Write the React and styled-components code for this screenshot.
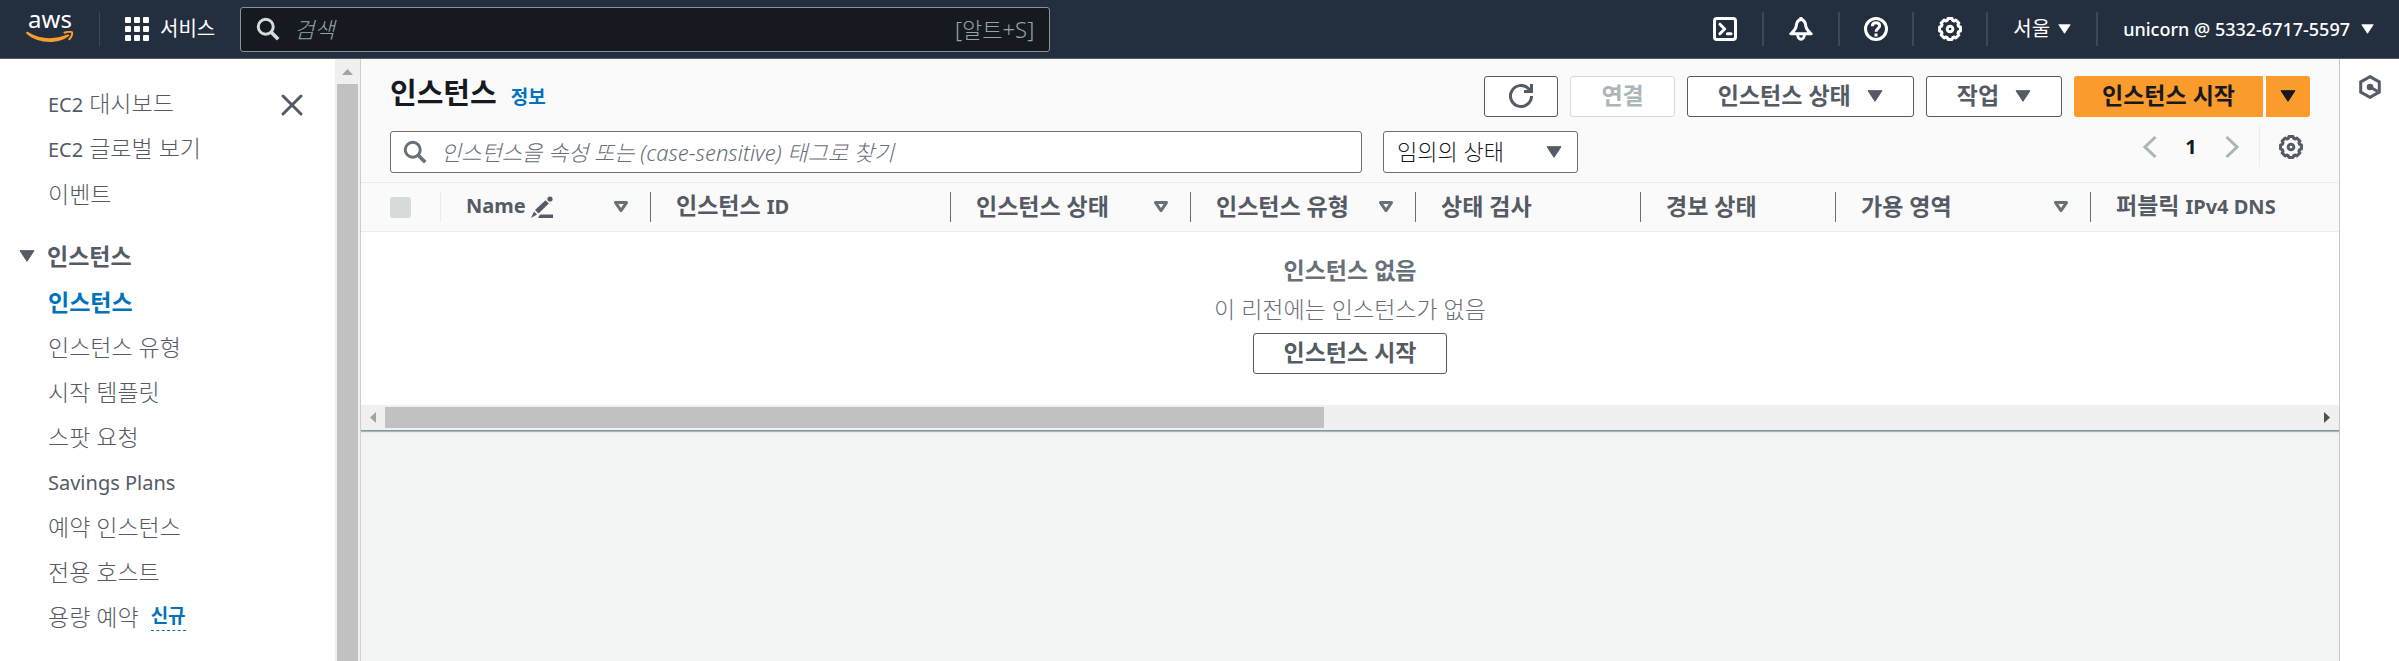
import React from "react";
import styled, { createGlobalStyle, css } from "styled-components";

const Global = createGlobalStyle`
  *, *::before, *::after { box-sizing: border-box; }
  html, body, #root { height: 100%; }
  body {
    margin: 0;
    color: #545b64;
    background: #f2f4f4;
    font-family: "Noto Sans", "Noto Sans CJK KR", sans-serif;
    font-size: 23px;
    font-weight: 300;
    line-height: 30px;
  }
  button, input, select { font: inherit; color: inherit; margin: 0; }
  a { color: inherit; text-decoration: none; }
  svg { display: block; flex: none; }
`;

const Shell = styled.div`
  min-height: 100%;
  display: flex;
  flex-direction: column;
`;

/* ---------- icons ---------- */

const Stroke = ({ size = 24, w = 2, children }) => (
  <svg width={size} height={size} viewBox="0 0 16 16" fill="none" stroke="currentColor" strokeWidth={w} aria-hidden="true">
    {children}
  </svg>
);

const SearchIcon = () => (
  <Stroke>
    <circle cx="6.5" cy="6.5" r="5" />
    <path d="M10 10 14.800 14.800" strokeWidth="2.400" />
  </Stroke>
);

const CloseIcon = () => (
  <Stroke>
    <path d="M2 2l12 12M14 2L2 14" strokeLinecap="round" />
  </Stroke>
);

const gearPath = (() => {
  const teeth = 8;
  const pts = [];
  for (let i = 0; i < teeth; i++) {
    const a = (i / teeth) * Math.PI * 2;
    [[-0.2, 7.1], [0.2, 7.1], [0.3, 6], [0.485, 6]].forEach(([d, r]) => {
      pts.push(`${(8 + r * Math.sin(a + d)).toFixed(2)} ${(8 - r * Math.cos(a + d)).toFixed(2)}`);
    });
  }
  return `M${pts.join("L")}Z`;
})();

const GearIcon = () => (
  <Stroke>
    <path d={gearPath} strokeLinejoin="round" />
    <circle cx="8" cy="8" r="1.9" />
  </Stroke>
);

const TerminalIcon = () => (
  <Stroke>
    <rect x="1" y="1" width="14" height="14" rx="1.6" />
    <path d="M4.6 4.800 7.800 8l-3.200 3.200" strokeLinejoin="round" strokeLinecap="round" />
    <path d="M9.600 11.100h2.400" strokeLinecap="round" />
  </Stroke>
);

const BellIcon = () => (
  <Stroke>
    <path d="M8 1.500C5.700 2.200 5 4 4.800 6 4.500 8.400 3.200 9.400 1.200 11.200h13.600C12.800 9.400 11.500 8.400 11.200 6 11 4 10.300 2.200 8 1.500Z" strokeLinejoin="round" />
    <path d="M5.800 11.800a2.200 3 0 0 0 4.400 0" />
    <path d="M8 0v2" />
  </Stroke>
);

const HelpIcon = () => (
  <Stroke>
    <circle cx="8" cy="8" r="7" />
    <path d="M5.600 6.200C5.600 4.700 6.600 3.900 8 3.900s2.400.800 2.400 2.100C10.400 7.700 8 7.600 8 9.800" />
    <path d="M8 11v2" />
  </Stroke>
);

const RefreshIcon = () => (
  <Stroke>
    <path d="M15 8a7 7 0 1 1-2.200-5.100L14.300 4.500" />
    <path d="M15 0v5h-5" />
  </Stroke>
);

const HexIcon = () => (
  <Stroke>
    <path d="M8 1.100 14.200 4.600v6.800L8 14.900 1.800 11.400V4.600Z" />
    <circle cx="8" cy="8" r="2.200" fill="currentColor" stroke="none" />
    <path d="M8 8l5 2.800" />
  </Stroke>
);

const EditIcon = () => (
  <svg width="22" height="22" viewBox="0 0 22 22" fill="currentColor" aria-hidden="true">
    <circle cx="19" cy="3" r="2.600" />
    <path d="M14.500 4.200 17.800 7.500 7.500 17.500 4 14Z" />
    <path d="M3 15.500 6 18.500 0 22Z" />
    <path d="M9 18.500h13V22H7Z" />
  </svg>
);

const GridIcon = () => (
  <svg width="24" height="24" viewBox="0 0 24 24" fill="currentColor" aria-hidden="true">
    {[0, 9, 18].map((y) => [0, 9, 18].map((x) => <rect key={`${x}-${y}`} x={x} y={y} width="6" height="6" rx="1" />))}
  </svg>
);

const Caret = ({ width = 16, height = 12 }) => (
  <svg width={width} height={height} viewBox="0 0 16 12" fill="currentColor" stroke="currentColor" strokeLinejoin="round" aria-hidden="true">
    <path d="M1 .700h14L8 11.300Z" />
  </svg>
);

const SortCaret = () => (
  <svg width="16" height="12" viewBox="0 0 16 12" fill="none" stroke="#687078" strokeWidth="3" strokeLinejoin="round" aria-hidden="true">
    <path d="M2.500 1.600h11L8 9.600Z" />
  </svg>
);

const Chevron = ({ flip }) => (
  <svg width="14" height="22" viewBox="0 0 14 22" fill="none" stroke="currentColor" strokeWidth="3" aria-hidden="true">
    <path d={flip ? "M1.500 1 12 11 1.500 21" : "M12.500 1 2 11 12.500 21"} />
  </svg>
);

/* ---------- top navigation ---------- */

const TopNav = styled.header`
  display: flex;
  align-items: center;
  height: 59px;
  padding: 0 0 0 26px;
  color: #fff;
  background: #232f3e;
  border-bottom: 1px solid #545b64;
  font-size: 20px;
`;

const Logo = styled.a`
  display: flex;
  flex-direction: column;
  align-items: center;
  width: 48px;
  margin-right: 25px;
  padding-bottom: 9px;
  font-size: 24px;
  font-weight: 400;
  line-height: 24px;
`;

const NavDivider = styled.span`
  flex: none;
  width: ${(p) => p.$width || 2}px;
  height: 34px;
  background: #414750;
`;

const NavButton = styled.button`
  display: flex;
  align-items: center;
  gap: ${(p) => p.$gap || 8}px;
  padding: 0 ${(p) => p.$pad || 25}px;
  border: 0;
  background: none;
  font-weight: 400;
  white-space: nowrap;
`;

const NavSearch = styled.label`
  display: flex;
  align-items: center;
  flex: 0 1 810px;
  height: 45px;
  padding: 0 15px;
  gap: 14px;
  border: 1px solid #879596;
  border-radius: 3px;
  background: #161920;
  color: #d5dbdb;
`;

const NavTools = styled.div`
  display: flex;
  align-items: center;
  margin-left: auto;
`;

const TextInput = styled.input`
  flex: 1;
  min-width: 0;
  padding: 0;
  border: 0;
  outline: 0;
  background: transparent;
  font-size: 22px;
  &::placeholder { color: ${(p) => p.$hint}; opacity: 1; font-style: italic; }
`;

const Shortcut = styled.span`
  color: #95a5a6;
  font-size: 22px;
`;

const Latin = styled.span`
  font-size: ${(p) => (p.$small ? 18 : 20)}px;
  font-weight: ${(p) => (p.$bold ? 700 : p.$small ? 500 : 400)};
`;

/* ---------- body ---------- */

const Body = styled.div`
  display: flex;
  flex: 1;
`;

const Sidebar = styled.nav`
  position: relative;
  flex: none;
  width: 335px;
  padding: 22px 0 20px;
  background: #fff;
`;

const NavList = styled.ul`
  list-style: none;
  margin: 0;
  padding: 0 0 0 48px;
`;

const NavItem = styled.li`
  display: flex;
  align-items: center;
  height: 45px;
  color: ${(p) => (p.$active ? "#0073bb" : "#545b64")};
  font-weight: ${(p) => (p.$active ? 700 : "inherit")};
`;

const Section = styled.button`
  display: flex;
  align-items: center;
  gap: 12px;
  height: 45px;
  margin-top: 18px;
  padding: 0 0 2px 19px;
  border: 0;
  background: none;
  font-weight: 700;
`;

const NewTag = styled.a`
  margin-left: 12px;
  border-bottom: 1px dashed #0073bb;
  color: #0073bb;
  font-size: 19px;
  font-weight: 700;
  line-height: 28px;
`;

const CloseButton = styled.button`
  position: absolute;
  top: 34px;
  right: 31px;
  padding: 0;
  border: 0;
  background: none;
`;

const VScroll = styled.div`
  flex: none;
  display: flex;
  flex-direction: column;
  align-items: center;
  width: 26px;
  background: #f0f0f0;
  border-right: 1px solid #d0d3d3;
`;

const Thumb = styled.div`
  background: #c1c1c1;
  ${(p) =>
    p.$vertical
      ? css`
          flex: 1;
          width: 21px;
        `
      : css`
          width: calc(100% * 18 / 37);
          height: 21px;
        `}
`;

const ArrowBox = styled.span`
  display: grid;
  place-items: center;
  flex: none;
  width: 24px;
  height: 25px;
`;

const Main = styled.main`
  flex: 1;
  min-width: 0;
`;

const Panel = styled.section`
  background: #fafafa;
  border-bottom: 1px solid #879596;
  box-shadow: 0 1px 1px #aab7b8;
`;

const PanelHead = styled.div`
  display: flex;
  align-items: flex-start;
  justify-content: space-between;
  padding: 17px 29px 0;
`;

const Title = styled.h1`
  display: flex;
  align-items: baseline;
  gap: 14px;
  margin: 0;
  color: #16191f;
  font-size: 29px;
  line-height: 34px;
`;

const InfoLink = styled.a`
  color: #0073bb;
  font-size: 19px;
`;

const Actions = styled.div`
  display: flex;
  gap: 12px;
`;

const Button = styled.button`
  display: flex;
  align-items: center;
  justify-content: center;
  gap: 16px;
  height: 41px;
  padding: 0 ${(p) => p.$pad || 30}px 3px;
  border: 1px solid #545b64;
  border-radius: 3px;
  background: #fff;
  font-weight: 700;
  white-space: nowrap;
  &:disabled { color: #aab7b8; border-color: #d5dbdb; }
  > svg { margin-top: 2px; }
  ${(p) =>
    p.$primary &&
    css`
      color: #16191f;
      border: 0;
      background: #fa9b2c;
      border-radius: ${p.$primary === "left" ? "3px 0 0 3px" : "0 3px 3px 0"};
    `}
`;

const Split = styled.div`
  display: flex;
  gap: 3px;
`;

const Filters = styled.div`
  display: flex;
  padding: 14px 29px 9px;
`;

const SearchBox = styled.label`
  display: flex;
  align-items: center;
  flex: 0 1 972px;
  height: 42px;
  gap: 14px;
  padding: 0 12px;
  border: 1px solid #687078;
  border-radius: 3px;
  background: #fff;
  color: #687078;
`;

const SelectBox = styled.label`
  position: relative;
  display: flex;
  align-items: center;
  width: 195px;
  margin-left: 21px;
  > svg { position: absolute; right: 16px; pointer-events: none; }
`;

const Select = styled.select`
  appearance: none;
  width: 100%;
  height: 42px;
  padding: 0 13px 2px;
  border: 1px solid #687078;
  border-radius: 3px;
  background: #fff;
  color: #16191f;
  font-size: 22px;
`;

const Pager = styled.div`
  display: flex;
  align-items: center;
  gap: 20px;
  height: 41px;
  margin: -5px 7px 0 auto;
  color: #545b64;
`;

const PagerArrow = styled.button`
  padding: 0;
  border: 0;
  background: none;
  color: #aab7b8;
`;

const PageNumber = styled.span`
  width: 28px;
  text-align: center;
  color: #16191f;
  font-size: 20px;
  font-weight: 700;
`;

const SettingsButton = styled.button`
  display: flex;
  align-items: center;
  height: 41px;
  padding: 0 0 0 19px;
  border: 0;
  border-left: 1px solid #eaeded;
  background: none;
`;

const Table = styled.table`
  width: 100%;
  table-layout: fixed;
  border-collapse: collapse;
`;

const HeadCell = styled.th`
  width: ${(p) => (p.$w ? `${p.$w}px` : "auto")};
  height: 49px;
  padding: 0;
  border-top: 1px solid #eaeded;
  border-bottom: 1px solid #eaeded;
  text-align: left;
`;

const HeadInner = styled.div`
  display: flex;
  align-items: center;
  height: 30px;
  padding: 0 21px 0 25px;
  border-right: ${(p) => (p.$last ? 0 : 1)}px solid ${(p) => (p.$light ? "#eaeded" : "#687078")};
  white-space: nowrap;
  > span { padding-bottom: 3px; }
  > svg:last-child { margin-left: auto; }
  > svg:not(:last-child) { margin-left: 5px; }
`;

const CheckBox = styled.input`
  appearance: none;
  width: 21px;
  height: 21px;
  margin: 0 0 0 4px;
  border-radius: 3px;
  background: #d5dbdb;
`;

const EmptyCell = styled.td`
  height: 173px;
  padding: 0;
  background: #fff;
`;

const Empty = styled.div`
  display: flex;
  flex-direction: column;
  align-items: center;
  gap: 9px;
  padding-bottom: 7px;
  color: #687078;
  strong, p { margin: 0; line-height: 30px; }
  strong { font-weight: 700; }
  ${Button} { color: #545b64; }
`;

const HScroll = styled.div`
  display: flex;
  align-items: center;
  height: 25px;
  background: #f0f0f0;
`;

const Track = styled.div`
  flex: 1;
`;

const Rail = styled.aside`
  flex: none;
  width: 60px;
  padding: 16px 0 0 18px;
  background: #fff;
  border-left: 1px solid #c4c8c8;
`;

const RailButton = styled.button`
  padding: 0;
  border: 0;
  background: none;
`;

const links = ["인스턴스", "인스턴스 유형", "시작 템플릿", "스팟 요청", "Savings Plans", "예약 인스턴스", "전용 호스트"];

const columns = [
  { w: 300, label: <>인스턴스 <Latin $bold>ID</Latin></> },
  { w: 240, label: "인스턴스 상태", sort: true },
  { w: 225, label: "인스턴스 유형", sort: true },
  { w: 225, label: "상태 검사" },
  { w: 195, label: "경보 상태" },
  { w: 255, label: "가용 영역", sort: true },
  { label: <>퍼블릭 <Latin $bold>IPv4 DNS</Latin></>, last: true },
];

export default function App() {
  return (
    <Shell>
      <Global />
      <TopNav>
        <Logo href="#" aria-label="AWS">
          aws
          <svg width="48" height="12" viewBox="0 0 48 12" fill="none" aria-hidden="true">
            <path d="M0 1.600C.300.600 1.200.500 2 1 14 8.400 28 9 41.500 3.600c1.500-.600 2.500.600 1.200 1.600C32 13.400 12 13 .500 2.700Z" fill="#fa9b2c" />
            <path d="M38.500 1.700c2.500-.900 6.500-1.200 7.500-.400.600 1.500-.500 5.100-2.700 7" stroke="#fa9b2c" strokeWidth="2" strokeLinecap="round" />
          </svg>
        </Logo>
        <NavDivider $width={1} />
        <NavButton $gap={11}>
          <GridIcon />
          서비스
        </NavButton>
        <NavSearch>
          <SearchIcon />
          <TextInput type="search" placeholder="검색" $hint="#95a5a6" aria-label="검색" />
          <Shortcut>[알트+S]</Shortcut>
        </NavSearch>
        <NavTools>
          <NavButton aria-label="CloudShell"><TerminalIcon /></NavButton>
          <NavDivider />
          <NavButton aria-label="알림"><BellIcon /></NavButton>
          <NavDivider />
          <NavButton $pad={24} aria-label="도움말"><HelpIcon /></NavButton>
          <NavDivider />
          <NavButton $pad={24} aria-label="설정"><GearIcon /></NavButton>
          <NavDivider />
          <NavButton>서울 <Caret width={13} height={10} /></NavButton>
          <NavDivider />
          <NavButton $gap={11}><Latin $small>unicorn @ 5332-6717-5597</Latin> <Caret width={13} height={10} /></NavButton>
        </NavTools>
      </TopNav>
      <Body>
        <Sidebar>
          <NavList>
            <NavItem><a href="#"><Latin>EC2</Latin> 대시보드</a></NavItem>
            <NavItem><a href="#"><Latin>EC2</Latin> 글로벌 보기</a></NavItem>
            <NavItem><a href="#">이벤트</a></NavItem>
          </NavList>
          <CloseButton aria-label="닫기"><CloseIcon /></CloseButton>
          <Section aria-expanded="true"><Caret /> 인스턴스</Section>
          <NavList>
            {links.map((text, i) => (
              <NavItem key={text} $active={i === 0}>
                <a href="#">{text === "Savings Plans" ? <Latin>{text}</Latin> : text}</a>
              </NavItem>
            ))}
            <NavItem><a href="#">용량 예약</a><NewTag href="#">신규</NewTag></NavItem>
          </NavList>
        </Sidebar>
        <VScroll aria-hidden="true">
          <ArrowBox>
            <svg width="11" height="6" viewBox="0 0 11 6"><path d="M0 6 5.500 0 11 6Z" fill="#a3a3a3" /></svg>
          </ArrowBox>
          <Thumb $vertical />
        </VScroll>
        <Main>
          <Panel>
            <PanelHead>
              <Title>인스턴스 <InfoLink href="#">정보</InfoLink></Title>
              <Actions>
                <Button $pad={24} aria-label="새로 고침"><RefreshIcon /></Button>
                <Button disabled>연결</Button>
                <Button>인스턴스 상태 <Caret /></Button>
                <Button>작업 <Caret /></Button>
                <Split>
                  <Button $primary="left" $pad={28}>인스턴스 시작</Button>
                  <Button $primary="right" $pad={14} aria-label="시작 옵션"><Caret /></Button>
                </Split>
              </Actions>
            </PanelHead>
            <Filters>
              <SearchBox>
                <SearchIcon />
                <TextInput placeholder="인스턴스을 속성 또는 (case-sensitive) 태그로 찾기" $hint="#687078" aria-label="인스턴스 찾기" />
              </SearchBox>
              <SelectBox>
                <Select aria-label="상태 필터"><option>임의의 상태</option></Select>
                <Caret />
              </SelectBox>
              <Pager>
                <PagerArrow aria-label="이전 페이지"><Chevron /></PagerArrow>
                <PageNumber>1</PageNumber>
                <PagerArrow aria-label="다음 페이지"><Chevron flip /></PagerArrow>
                <SettingsButton aria-label="기본 설정"><GearIcon /></SettingsButton>
              </Pager>
            </Filters>
            <Table>
              <thead>
                <tr>
                  <HeadCell $w={80}><HeadInner $light><CheckBox type="checkbox" disabled aria-label="모두 선택" /></HeadInner></HeadCell>
                  <HeadCell $w={210}><HeadInner><Latin $bold>Name</Latin><EditIcon /><SortCaret /></HeadInner></HeadCell>
                  {columns.map((c, i) => (
                    <HeadCell key={i} $w={c.w}>
                      <HeadInner $last={c.last}><span>{c.label}</span>{c.sort && <SortCaret />}</HeadInner>
                    </HeadCell>
                  ))}
                </tr>
              </thead>
              <tbody>
                <tr>
                  <EmptyCell colSpan={9}>
                    <Empty>
                      <strong>인스턴스 없음</strong>
                      <p>이 리전에는 인스턴스가 없음</p>
                      <Button>인스턴스 시작</Button>
                    </Empty>
                  </EmptyCell>
                </tr>
              </tbody>
            </Table>
            <HScroll aria-hidden="true">
              <ArrowBox>
                <svg width="6" height="11" viewBox="0 0 6 11"><path d="M6 0 0 5.500 6 11Z" fill="#a3a3a3" /></svg>
              </ArrowBox>
              <Track><Thumb /></Track>
              <ArrowBox>
                <svg width="6" height="11" viewBox="0 0 6 11"><path d="M0 0 6 5.500 0 11Z" fill="#505050" /></svg>
              </ArrowBox>
            </HScroll>
          </Panel>
        </Main>
        <Rail>
          <RailButton aria-label="도구"><HexIcon /></RailButton>
        </Rail>
      </Body>
    </Shell>
  );
}
